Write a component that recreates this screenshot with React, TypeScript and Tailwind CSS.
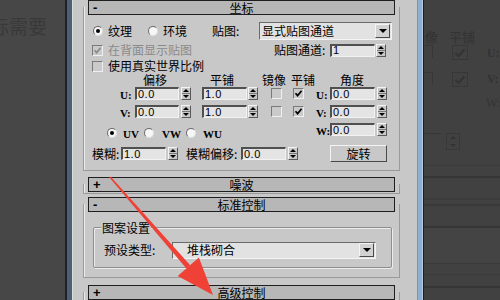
import React from "react";

function Spin() {
  return (
    <div className="w-[10px] h-[13px] shrink-0 flex flex-col bg-[#c8c8c8] border border-t-[#f4f4f4] border-l-[#f4f4f4] border-b-[#5a5a5a] border-r-[#5a5a5a]">
      <div className="flex-1 flex items-center justify-center">
        <div className="w-0 h-0 border-l-[3px] border-r-[3px] border-b-[3px] border-l-transparent border-r-transparent border-b-black" />
      </div>
      <div className="h-px bg-[#7a7a7a]" />
      <div className="flex-1 flex items-center justify-center">
        <div className="w-0 h-0 border-l-[3px] border-r-[3px] border-t-[3px] border-l-transparent border-r-transparent border-t-black" />
      </div>
    </div>
  );
}

function Field({ v, className }: { v: string; className: string }) {
  return (
    <div
      className={
        className +
        " h-[13px] shrink-0 bg-[#e4e4e4] border-t-2 border-l-2 border-b border-r border-t-[#505050] border-l-[#505050] border-b-[#f2f2f2] border-r-[#f2f2f2] flex items-center pl-[1px] font-['Liberation_Sans',sans-serif] text-[11px] leading-none tracking-[0.5px] text-black"
      }
    >
      {v}
    </div>
  );
}

function Check({ on, disabled }: { on?: boolean; disabled?: boolean }) {
  return (
    <div className="w-[11px] h-[11px] shrink-0 border border-t-[#7a7a7a] border-l-[#7a7a7a] border-b-[#f0f0f0] border-r-[#f0f0f0] bg-[#cacaca] flex items-center justify-center">
      {on && (
        <svg width="9" height="9" viewBox="0 0 9 9">
          <path
            d="M1.5 4.2 L3.6 6.6 L7.6 1.8"
            stroke={disabled ? "#8a8a8a" : "#000"}
            strokeWidth="1.7"
            fill="none"
          />
        </svg>
      )}
    </div>
  );
}

function Radio({ on }: { on?: boolean }) {
  return (
    <div className="w-[10px] h-[10px] shrink-0 rounded-full bg-[#f6f6f6] border border-t-[#6a6a6a] border-l-[#6a6a6a] border-b-[#e0e0e0] border-r-[#e0e0e0] flex items-center justify-center">
      {on && <div className="w-[4px] h-[4px] rounded-full bg-black" />}
    </div>
  );
}

function DownBtn() {
  return (
    <div className="w-[15px] h-[14px] mr-[1px] shrink-0 bg-[#d2d2d2] border border-t-[#f4f4f4] border-l-[#f4f4f4] border-b-[#4a4a4a] border-r-[#4a4a4a] flex items-center justify-center">
      <div className="w-0 h-0 border-l-[4px] border-r-[4px] border-t-[4px] border-l-transparent border-r-transparent border-t-black" />
    </div>
  );
}

function Header({ sign, title, className }: { sign: string; title: string; className: string }) {
  return (
    <div
      className={
        className +
        " h-[15px] mx-[4px] bg-[#b7b7b7] border border-[#1e1e1e] grid grid-cols-[20px_1fr_20px] items-center leading-none"
      }
    >
      <span className="pl-[4px] font-['Liberation_Sans',sans-serif] font-bold text-[13px]">{sign}</span>
      <span className="text-center">{title}</span>
      <span />
    </div>
  );
}

function Lbl({ t }: { t: string }) {
  return <span className="font-['Liberation_Serif',serif] font-bold text-[11px] leading-none">{t}</span>;
}

export default function App() {
  return (
    <div className="relative w-[500px] h-[300px] overflow-hidden flex font-['Noto_Sans_CJK_SC',sans-serif] text-[12px] text-black">
      {/* left dark background */}
      <div className="w-[65px] h-full bg-[#474747] shrink-0 overflow-hidden">
        <div className="mt-[16px] ml-[-10px] whitespace-nowrap text-[19px] leading-none text-[#393939]">标需要</div>
      </div>
      {/* left frame */}
      <div className="w-[8px] h-full shrink-0 flex">
        <div className="w-[2px] bg-[#1c222b]" />
        <div className="w-[5px] bg-[#505e72]" />
        <div className="w-[1px] bg-[#dcdcdc]" />
      </div>
      {/* panel */}
      <div className="w-[344px] h-full shrink-0 bg-[#c8c8c8] pl-[10px] pt-[7px] flex flex-col">
        {/* Rollout 1 : 坐标 */}
        <div className="w-[317px] border-l border-r border-b border-[#9a9a9a] shadow-[inset_1px_0_0_#ececec] pb-[8px]">
          <Header className="-mt-[7px]" sign="-" title="坐标" />
          {/* Row A */}
          <div className="mt-[7px] h-[18px] flex items-center">
            <div className="w-[9px] shrink-0" />
            <Radio on />
            <div className="w-[5px] shrink-0" />
            <span className="w-[40px] shrink-0">纹理</span>
            <Radio />
            <div className="w-[5px] shrink-0" />
            <span className="w-[49px] shrink-0">环境</span>
            <span className="w-[47px] shrink-0">贴图:</span>
            <div className="w-[133px] h-[18px] shrink-0 bg-[#e2e2e2] border border-t-[#6a6a6a] border-l-[#6a6a6a] border-b-[#f4f4f4] border-r-[#f4f4f4] flex items-center">
              <span className="flex-1 pl-[2px] leading-none">显式贴图通道</span>
              <DownBtn />
            </div>
          </div>
          {/* Row B */}
          <div className="mt-[3px] h-[14px] flex items-center">
            <div className="w-[8px] shrink-0" />
            <Check on disabled />
            <div className="w-[5px] shrink-0" />
            <span className="w-[166px] shrink-0 text-[#8a8a8a] leading-none">在背面显示贴图</span>
            <span className="w-[56px] shrink-0 leading-none">贴图通道:</span>
            <Field className="w-[45px]" v="1" />
            <div className="w-[1px] shrink-0" />
            <Spin />
          </div>
          {/* Row C */}
          <div className="mt-[2px] h-[14px] flex items-center">
            <div className="w-[8px] shrink-0" />
            <Check />
            <div className="w-[5px] shrink-0" />
            <span className="leading-none">使用真实世界比例</span>
          </div>
          {/* Row D */}
          <div className="h-[14px] flex items-end pb-[1px] leading-none">
            <div className="w-[59px] shrink-0" />
            <span className="w-[67px] shrink-0">偏移</span>
            <span className="w-[52px] shrink-0">平铺</span>
            <span className="w-[29px] shrink-0">镜像</span>
            <span className="w-[49px] shrink-0">平铺</span>
            <span className="shrink-0">角度</span>
          </div>
          {/* Rows U / V */}
          {(["U", "V"] as const).map((k, i) => (
            <div key={k} className={(i === 0 ? "" : "mt-[5px] ") + "h-[13px] flex items-center"}>
              <div className="w-[36px] shrink-0" />
              <span className="w-[15px] shrink-0">
                <Lbl t={k + ":"} />
              </span>
              <Field className="w-[44px]" v="0.0" />
              <div className="w-[2px] shrink-0" />
              <Spin />
              <div className="w-[11px] shrink-0" />
              <Field className="w-[45px]" v="1.0" />
              <div className="w-[1px] shrink-0" />
              <Spin />
              <div className="w-[13px] shrink-0" />
              <Check />
              <div className="w-[11px] shrink-0" />
              <Check on />
              <div className="w-[12px] shrink-0" />
              <span className="w-[14px] shrink-0">
                <Lbl t={k + ":"} />
              </span>
              <Field className="w-[45px]" v="0.0" />
              <div className="w-[2px] shrink-0" />
              <Spin />
            </div>
          ))}
          {/* Row W + radios */}
          <div className="mt-[5px] flex items-start">
            <div className="w-[232px] shrink-0 pt-[5px] h-[15px] flex items-center">
              <div className="w-[23px] shrink-0" />
              <Radio on />
              <div className="w-[6px] shrink-0" />
              <span className="w-[21px] shrink-0"><Lbl t="UV" /></span>
              <Radio />
              <div className="w-[8px] shrink-0" />
              <span className="w-[24px] shrink-0"><Lbl t="VW" /></span>
              <Radio />
              <div className="w-[7px] shrink-0" />
              <span className="shrink-0"><Lbl t="WU" /></span>
            </div>
            <div className="h-[13px] flex items-center">
              <span className="w-[14px] shrink-0">
                <Lbl t="W:" />
              </span>
              <Field className="w-[45px]" v="0.0" />
              <div className="w-[2px] shrink-0" />
              <Spin />
            </div>
          </div>
          {/* Row blur */}
          <div className="mt-[7px] h-[17px] flex items-center">
            <div className="w-[8px] shrink-0" />
            <span className="w-[29px] shrink-0 leading-none">模糊:</span>
            <Field className="w-[45px]" v="1.0" />
            <div className="w-[2px] shrink-0" />
            <Spin />
            <div className="w-[8px] shrink-0" />
            <span className="w-[55px] shrink-0 leading-none">模糊偏移:</span>
            <Field className="w-[45px]" v="0.0" />
            <div className="w-[2px] shrink-0" />
            <Spin />
            <div className="w-[32px] shrink-0" />
            <div className="w-[57px] h-[17px] shrink-0 bg-[#c8c8c8] border border-t-[#f4f4f4] border-l-[#f4f4f4] border-b-[#4a4a4a] border-r-[#4a4a4a] flex items-center justify-center leading-none">
              旋转
            </div>
          </div>
        </div>

        {/* Rollout 2 : 噪波 */}
        <div className="mt-[13px] w-[317px] border-l border-r border-b border-[#9a9a9a] shadow-[inset_1px_0_0_#ececec] pb-[1px]">
          <Header className="-mt-[7px]" sign="+" title="噪波" />
        </div>

        {/* Rollout 3 : 标准控制 */}
        <div className="mt-[10px] w-[317px] border-l border-r border-b border-[#9a9a9a] shadow-[inset_1px_0_0_#ececec] pb-[9px]">
          <Header className="-mt-[7px]" sign="-" title="标准控制" />
          <div className="mt-[15px] ml-[9px] w-[299px] border border-[#8e8e8e] shadow-[inset_1px_1px_0_#ececec,1px_1px_0_#ececec] rounded-[2px] pb-[9px]">
            <div className="-mt-[7px] ml-[7px] w-fit h-[13px] px-[1px] bg-[#c8c8c8] leading-[13px]">图案设置</div>
            <div className="mt-[8px] h-[16px] flex items-center">
              <div className="w-[10px] shrink-0" />
              <span className="w-[68px] shrink-0 leading-none">预设类型:</span>
              <div className="w-[204px] h-[17px] shrink-0 bg-[#e2e2e2] border border-t-[#6a6a6a] border-l-[#6a6a6a] border-b-[#f4f4f4] border-r-[#f4f4f4] flex items-center">
                <span className="flex-1 pl-[14px] leading-none">堆栈砌合</span>
                <DownBtn />
              </div>
            </div>
          </div>
        </div>

        {/* Rollout 4 : 高级控制 */}
        <div className="mt-[14px] w-[317px] border-l border-r border-b border-[#9a9a9a] shadow-[inset_1px_0_0_#ececec] pb-[1px]">
          <Header className="-mt-[7px]" sign="+" title="高级控制" />
        </div>
      </div>
      {/* right frame */}
      <div className="w-[7px] h-full shrink-0 flex">
        <div className="w-[1px] bg-[#8e8e8e]" />
        <div className="w-[4px] bg-[#8db0d2]" />
        <div className="w-[1px] bg-[#b8cde0]" />
        <div className="w-[1px] bg-[#1e1e1e]" />
      </div>
      {/* right dark background with ghost content */}
      <div className="w-[76px] h-full shrink-0 bg-[#414141] flex flex-col text-[#333333] overflow-hidden">
        <div className="h-[30px]" />
        <div className="h-[13px] flex items-center text-[13px] leading-none whitespace-nowrap">
          <span className="w-[24px] ml-[1px]">像</span>
          <span>平铺</span>
        </div>
        <div className="mt-[2px] h-[15px] flex items-start">
          <div className="w-[8px] h-[13px] ml-[1px] border-t border-r border-[#373737]" />
          <div className="w-[16px] h-[15px] ml-[19px] border border-[#373737] flex items-center justify-center">
            <svg width="12" height="10" viewBox="0 0 12 10"><path d="M1.5 5 L4.5 8 L10.5 1.5" stroke="#333" strokeWidth="2" fill="none" /></svg>
          </div>
          <span className="ml-[19px] font-['Liberation_Serif',serif] font-bold text-[12px] leading-none mt-[2px]">U:</span>
        </div>
        <div className="mt-[12px] h-[15px] flex items-start">
          <div className="w-[8px] h-[13px] ml-[1px] border-t border-r border-[#373737]" />
          <div className="w-[16px] h-[15px] ml-[19px] border border-[#373737] flex items-center justify-center">
            <svg width="12" height="10" viewBox="0 0 12 10"><path d="M1.5 5 L4.5 8 L10.5 1.5" stroke="#333" strokeWidth="2" fill="none" /></svg>
          </div>
          <span className="ml-[19px] font-['Liberation_Serif',serif] font-bold text-[12px] leading-none mt-[1px]">V:</span>
        </div>
        <div className="mt-[10px] h-[12px] flex items-center">
          <span className="ml-[62px] font-['Liberation_Serif',serif] text-[12px] leading-none">W:</span>
        </div>
        <div className="mt-[24px] h-[17px] flex items-start">
          <div className="w-[16px] ml-[1px] h-px bg-[#363636]" />
          <div className="w-[14px] h-[17px] ml-[5px] border border-[#383838] flex flex-col items-center justify-around">
            <div className="w-0 h-0 border-l-[3px] border-r-[3px] border-b-[3px] border-l-transparent border-r-transparent border-b-[#333]" />
            <div className="w-0 h-0 border-l-[3px] border-r-[3px] border-t-[3px] border-l-transparent border-r-transparent border-t-[#333]" />
          </div>
        </div>
        <div className="mt-[15px] h-px bg-[#3a3a3a]" />
        <div className="mt-[10px] h-[2px] bg-[#353535]" />
        <div className="mt-[20px] h-[2px] bg-[#3b3b3b]" />
        <div className="mt-[4px] h-[2px] bg-[#393939]" />
        <div className="mt-[20px] h-[2px] bg-[#353535]" />
        <div className="h-[35px] bg-[#444444]" />
        <div className="h-px bg-[#3a3a3a]" />
        <div className="mt-[10px] h-px bg-[#3a3a3a]" />
        <div className="mt-[11px] h-[2px] bg-[#353535]" />
      </div>

      {/* red annotation arrow */}
      <svg className="absolute left-0 top-0 pointer-events-none" width="500" height="300" viewBox="0 0 500 300">
        <polygon points="110.6,176.5 109.4,177.5 186.4,268.4 190.2,265.2" fill="#ef4136" />
        <polygon points="213,295 177.7,276 198.9,257.6" fill="#ef4136" />
      </svg>
    </div>
  );
}
